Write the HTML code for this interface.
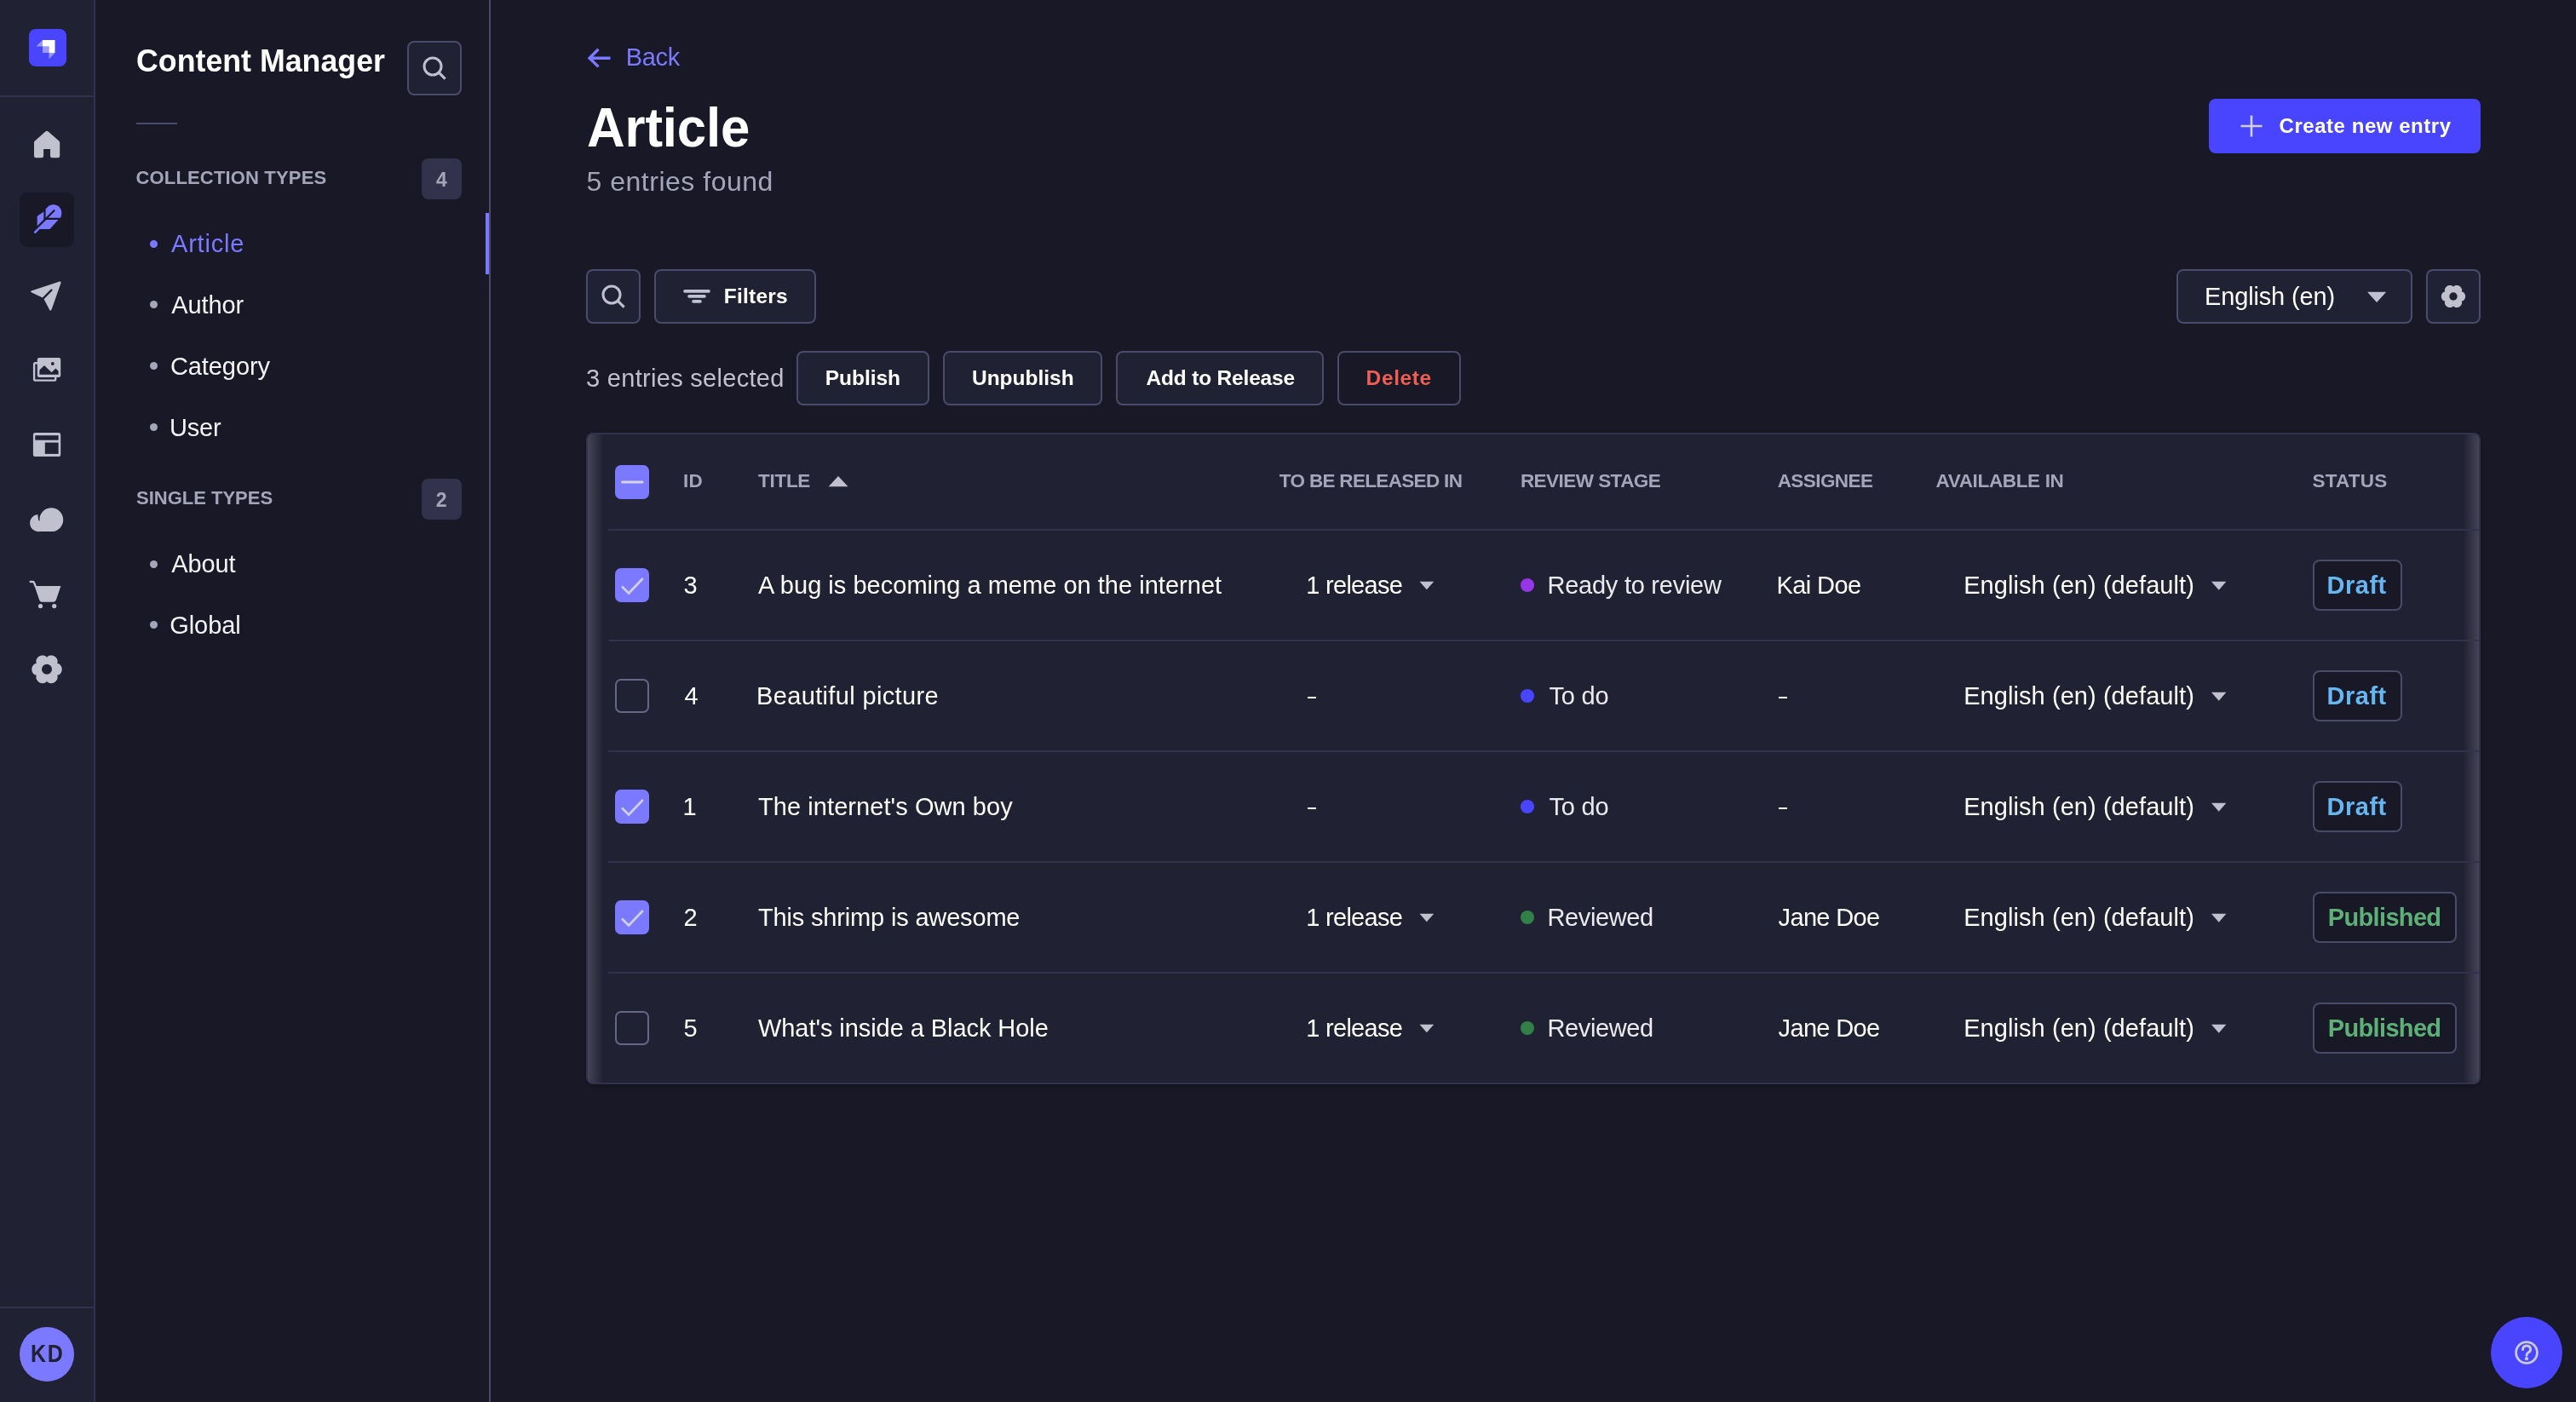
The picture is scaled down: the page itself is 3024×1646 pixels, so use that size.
<!DOCTYPE html>
<html><head><meta charset="utf-8"><title>Content Manager</title>
<style>
html,body{margin:0;padding:0;width:3024px;height:1646px;overflow:hidden;background:#181826;font-family:"Liberation Sans",sans-serif}
.t{position:absolute;white-space:pre;line-height:1;}
#tx{position:absolute;left:0;top:0;width:3024px;height:1646px;will-change:transform}
svg{position:absolute;left:0;top:0}
</style></head><body>
<div style="position:absolute;left:0px;top:0px;width:110px;height:1646px;background:#212134;border-radius:0px;box-sizing:border-box;"></div><div style="position:absolute;left:110px;top:0px;width:2px;height:1646px;background:#32324d;border-radius:0px;box-sizing:border-box;"></div><div style="position:absolute;left:0px;top:112px;width:110px;height:2px;background:#32324d;border-radius:0px;box-sizing:border-box;"></div><div style="position:absolute;left:0px;top:1534px;width:110px;height:2px;background:#32324d;border-radius:0px;box-sizing:border-box;"></div><div style="position:absolute;left:574px;top:0px;width:2px;height:1646px;background:#4a4a6a;border-radius:0px;box-sizing:border-box;"></div><div style="position:absolute;left:570px;top:250px;width:4px;height:72px;background:#7b79ff;border-radius:0px;box-sizing:border-box;"></div><div style="position:absolute;left:478px;top:48px;width:64px;height:64px;background:#212134;border:2px solid #4a4a6a;border-radius:8px;box-sizing:border-box;"></div><div style="position:absolute;left:160px;top:144px;width:48px;height:2px;background:#4a4a6a;border-radius:0px;box-sizing:border-box;"></div><div style="position:absolute;left:495px;top:186px;width:47px;height:48px;background:#32324d;border-radius:8px;box-sizing:border-box;"></div><div style="position:absolute;left:495px;top:562px;width:47px;height:48px;background:#32324d;border-radius:8px;box-sizing:border-box;"></div><div style="position:absolute;left:175.5px;top:282.0px;width:9px;height:9px;border-radius:50%;background:#7b79ff"></div><div style="position:absolute;left:175.5px;top:353.3px;width:9px;height:9px;border-radius:50%;background:#a5a5ba"></div><div style="position:absolute;left:175.5px;top:425.0px;width:9px;height:9px;border-radius:50%;background:#a5a5ba"></div><div style="position:absolute;left:175.5px;top:497.0px;width:9px;height:9px;border-radius:50%;background:#a5a5ba"></div><div style="position:absolute;left:175.5px;top:657.8px;width:9px;height:9px;border-radius:50%;background:#a5a5ba"></div><div style="position:absolute;left:175.5px;top:729.3px;width:9px;height:9px;border-radius:50%;background:#a5a5ba"></div><div style="position:absolute;left:2593px;top:116px;width:319px;height:64px;background:#4945ff;border-radius:8px;box-sizing:border-box;"></div><div style="position:absolute;left:688px;top:316px;width:64px;height:64px;background:#212134;border:2px solid #4a4a6a;border-radius:8px;box-sizing:border-box;"></div><div style="position:absolute;left:768px;top:316px;width:190px;height:64px;background:#212134;border:2px solid #4a4a6a;border-radius:8px;box-sizing:border-box;"></div><div style="position:absolute;left:2555px;top:316px;width:277px;height:64px;background:#212134;border:2px solid #4a4a6a;border-radius:8px;box-sizing:border-box;"></div><div style="position:absolute;left:2848px;top:316px;width:64px;height:64px;background:#212134;border:2px solid #4a4a6a;border-radius:8px;box-sizing:border-box;"></div><div style="position:absolute;left:935px;top:412px;width:156px;height:64px;background:#212134;border:2px solid #4a4a6a;border-radius:8px;box-sizing:border-box;"></div><div style="position:absolute;left:1107px;top:412px;width:187px;height:64px;background:#212134;border:2px solid #4a4a6a;border-radius:8px;box-sizing:border-box;"></div><div style="position:absolute;left:1310px;top:412px;width:244px;height:64px;background:#212134;border:2px solid #4a4a6a;border-radius:8px;box-sizing:border-box;"></div><div style="position:absolute;left:1570px;top:412px;width:145px;height:64px;background:#181826;border:2px solid #4a4a6a;border-radius:8px;box-sizing:border-box;"></div><div style="position:absolute;left:688px;top:508px;width:2224px;height:765px;background:#212134;border:2px solid #32324d;border-radius:8px;box-sizing:border-box;box-shadow:0 2px 4px rgba(0,0,0,.25);overflow:hidden"><div style="position:absolute;left:0;top:0;bottom:0;width:18px;background:linear-gradient(to right,rgba(110,110,125,.45),rgba(33,33,52,0))"></div><div style="position:absolute;right:0;top:0;bottom:0;width:18px;background:linear-gradient(to left,rgba(110,110,125,.45),rgba(33,33,52,0))"></div></div><div style="position:absolute;left:714px;top:621px;width:2196px;height:2px;background:#32324d;border-radius:0px;box-sizing:border-box;"></div><div style="position:absolute;left:714px;top:751px;width:2196px;height:2px;background:#32324d;border-radius:0px;box-sizing:border-box;"></div><div style="position:absolute;left:714px;top:881px;width:2196px;height:2px;background:#32324d;border-radius:0px;box-sizing:border-box;"></div><div style="position:absolute;left:714px;top:1011px;width:2196px;height:2px;background:#32324d;border-radius:0px;box-sizing:border-box;"></div><div style="position:absolute;left:714px;top:1141px;width:2196px;height:2px;background:#32324d;border-radius:0px;box-sizing:border-box;"></div><div style="position:absolute;left:1535px;top:817.6px;width:9.8px;height:2.6px;background:#fff"></div><div style="position:absolute;left:2087.6px;top:817.6px;width:10px;height:2.6px;background:#fff"></div><div style="position:absolute;left:1535px;top:947.6px;width:9.8px;height:2.6px;background:#fff"></div><div style="position:absolute;left:2087.6px;top:947.6px;width:10px;height:2.6px;background:#fff"></div><div style="position:absolute;left:2715px;top:657px;width:105px;height:60px;background:#181826;border:2px solid #4a4a6a;border-radius:8px;box-sizing:border-box;"></div><div style="position:absolute;left:2715px;top:787px;width:105px;height:60px;background:#181826;border:2px solid #4a4a6a;border-radius:8px;box-sizing:border-box;"></div><div style="position:absolute;left:2715px;top:917px;width:105px;height:60px;background:#181826;border:2px solid #4a4a6a;border-radius:8px;box-sizing:border-box;"></div><div style="position:absolute;left:2715px;top:1047px;width:169px;height:60px;background:#181826;border:2px solid #4a4a6a;border-radius:8px;box-sizing:border-box;"></div><div style="position:absolute;left:2715px;top:1177px;width:169px;height:60px;background:#181826;border:2px solid #4a4a6a;border-radius:8px;box-sizing:border-box;"></div>
<svg width="3024" height="1646" viewBox="0 0 3024 1646"><rect x="34" y="34" width="44" height="44" rx="8" fill="#4945ff"/><path d="M50 47 H64.5 V62 H57.5 V54.5 H50 Z" fill="#fff"/><path d="M50 47 V54.5 H42.5 Z" fill="#fff" opacity=".45"/><path d="M57.5 62 V69.2 L64.5 62 Z" fill="#fff" opacity=".45"/><rect x="50" y="54.5" width="7.5" height="7.5" fill="#fff" opacity=".45"/><path d="M53.6 154.3 Q55 153 56.4 154.3 L69.3 165.6 Q70.2 166.4 70.2 167.6 V183 Q70.2 185.2 68 185.2 H61.2 Q59 185.2 59 183 V175 H51.1 V183 Q51.1 185.2 48.9 185.2 H42.2 Q40 185.2 40 183 V167.6 Q40 166.4 40.9 165.6 Z" fill="#c0c0cf"/><rect x="23" y="226" width="64" height="64" rx="9" fill="#181826"/><path d="M53.55 255.7 V245.4 L57.2 241.8 C58.8 240.7 60.8 240.2 62.8 240.2 C68.1 240.2 72.3 244.4 72.3 249.7 C72.3 251.9 71.9 253.9 71.1 255.7 Z" fill="#7b79ff"/><path d="M51.4 248.4 V258 L43.7 265.6 V254.6 Q43.7 253.8 44.4 253.2 Z" fill="#7b79ff"/><path d="M63.5 247.2 L42.5 268.2" stroke="#181826" stroke-width="2.1" stroke-linecap="round"/><path d="M54.3 258 H68.5 L58.5 269.1 H46.6 L42.2 273.5 Q41.2 274.5 40.2 273.5 Q39.3 272.6 40.3 271.7 Z" fill="#7b79ff"/><path d="M70 330.6 Q72 330.2 71.5 332.2 L60.6 363.2 Q59.4 366 58 363.4 L51.2 350.6 L50 349.4 L37.4 343.6 Q34.8 342.2 37.4 341.2 Z" fill="#c0c0cf"/><path d="M60.4 340.6 L50.4 350.6" stroke="#212134" stroke-width="2.4" stroke-linecap="round"/><path d="M44 426.2 H41.4 Q40.1 426.2 40.1 427.5 V445.3 Q40.1 446.6 41.4 446.6 H63.9 Q65.2 446.6 65.2 445.3 V443" stroke="#c0c0cf" stroke-width="2.4" fill="none"/><rect x="43.8" y="420" width="27.4" height="23" rx="2.2" fill="#c0c0cf"/><path d="M46.4 439.8 V434.6 L52 429 L60.5 437.2 L65.4 432.6 L68.6 435.8 V439.8 Z" fill="#212134"/><circle cx="61.8" cy="427" r="1.9" fill="#212134"/><rect x="38.9" y="508" width="32.3" height="28" rx="2.6" fill="#c0c0cf"/><rect x="41.3" y="511.2" width="27.3" height="5.5" fill="#212134"/><rect x="52.8" y="519.6" width="15.8" height="13.3" fill="#212134"/><path d="M44.3 604.1 A10 10 0 1 0 45.9 624.1 H60.3 A13.9 13.9 0 1 0 46.45 611.4 L45.2 610.9 Z" fill="#c0c0cf"/><path d="M35.6 683 H38.6 Q39.6 683 40 684 L41.6 688" stroke="#c0c0cf" stroke-width="2.3" fill="none" stroke-linecap="round"/><path d="M40.6 688.1 H71.4 L65.8 704.6 Q65 706.7 62.8 706.7 H49 Q46.8 706.7 46.2 704.6 Z" fill="#c0c0cf"/><circle cx="47.5" cy="711.6" r="2.6" fill="#c0c0cf"/><circle cx="63.7" cy="711.6" r="2.6" fill="#c0c0cf"/><polygon points="72.70,785.80 72.69,786.11 72.68,786.42 72.65,786.72 72.60,787.03 72.55,787.34 72.48,787.64 72.40,787.94 72.31,788.23 72.21,788.53 72.10,788.81 71.97,789.10 71.83,789.38 71.69,789.65 71.53,789.92 71.35,790.18 71.17,790.44 70.98,790.68 70.77,790.92 70.55,791.15 70.32,791.38 70.08,791.59 69.83,791.79 69.56,791.98 69.28,792.16 68.98,792.32 68.66,792.46 68.32,792.59 67.94,792.68 67.51,792.73 66.78,792.60 67.26,793.16 67.43,793.57 67.54,793.94 67.60,794.30 67.63,794.65 67.64,794.99 67.63,795.32 67.60,795.64 67.55,795.97 67.49,796.28 67.41,796.59 67.32,796.89 67.22,797.19 67.10,797.49 66.97,797.77 66.83,798.05 66.68,798.32 66.52,798.59 66.34,798.85 66.16,799.10 65.97,799.34 65.76,799.58 65.55,799.80 65.33,800.02 65.10,800.23 64.87,800.43 64.62,800.62 64.37,800.80 64.11,800.97 63.85,801.13 63.58,801.28 63.30,801.42 63.02,801.54 62.74,801.66 62.44,801.77 62.15,801.86 61.85,801.94 61.55,802.01 61.24,802.07 60.94,802.11 60.63,802.15 60.32,802.17 60.01,802.18 59.69,802.17 59.38,802.15 59.07,802.12 58.76,802.08 58.45,802.02 58.14,801.95 57.83,801.86 57.53,801.75 57.23,801.63 56.93,801.50 56.63,801.34 56.34,801.16 56.06,800.96 55.78,800.73 55.51,800.45 55.25,800.10 55.00,799.40 54.75,800.10 54.49,800.45 54.22,800.73 53.94,800.96 53.66,801.16 53.37,801.34 53.07,801.50 52.77,801.63 52.47,801.75 52.17,801.86 51.86,801.95 51.55,802.02 51.24,802.08 50.93,802.12 50.62,802.15 50.31,802.17 49.99,802.18 49.68,802.17 49.37,802.15 49.06,802.11 48.76,802.07 48.45,802.01 48.15,801.94 47.85,801.86 47.56,801.77 47.26,801.66 46.98,801.54 46.70,801.42 46.42,801.28 46.15,801.13 45.89,800.97 45.63,800.80 45.38,800.62 45.13,800.43 44.90,800.23 44.67,800.02 44.45,799.80 44.24,799.58 44.03,799.34 43.84,799.10 43.66,798.85 43.48,798.59 43.32,798.32 43.17,798.05 43.03,797.77 42.90,797.49 42.78,797.19 42.68,796.89 42.59,796.59 42.51,796.28 42.45,795.97 42.40,795.64 42.37,795.32 42.36,794.99 42.37,794.65 42.40,794.30 42.46,793.94 42.57,793.57 42.74,793.16 43.22,792.60 42.49,792.73 42.06,792.68 41.68,792.59 41.34,792.46 41.02,792.32 40.72,792.16 40.44,791.98 40.17,791.79 39.92,791.59 39.68,791.38 39.45,791.15 39.23,790.92 39.02,790.68 38.83,790.44 38.65,790.18 38.47,789.92 38.31,789.65 38.17,789.38 38.03,789.10 37.90,788.81 37.79,788.53 37.69,788.23 37.60,787.94 37.52,787.64 37.45,787.34 37.40,787.03 37.35,786.72 37.32,786.42 37.31,786.11 37.30,785.80 37.31,785.49 37.32,785.18 37.35,784.88 37.40,784.57 37.45,784.26 37.52,783.96 37.60,783.66 37.69,783.37 37.79,783.07 37.90,782.79 38.03,782.50 38.17,782.22 38.31,781.95 38.47,781.68 38.65,781.42 38.83,781.16 39.02,780.92 39.23,780.68 39.45,780.45 39.68,780.22 39.92,780.01 40.17,779.81 40.44,779.62 40.72,779.44 41.02,779.28 41.34,779.14 41.68,779.01 42.06,778.92 42.49,778.87 43.22,779.00 42.74,778.44 42.57,778.03 42.46,777.66 42.40,777.30 42.37,776.95 42.36,776.61 42.37,776.28 42.40,775.96 42.45,775.63 42.51,775.32 42.59,775.01 42.68,774.71 42.78,774.41 42.90,774.11 43.03,773.83 43.17,773.55 43.32,773.28 43.48,773.01 43.66,772.75 43.84,772.50 44.03,772.26 44.24,772.02 44.45,771.80 44.67,771.58 44.90,771.37 45.13,771.17 45.38,770.98 45.63,770.80 45.89,770.63 46.15,770.47 46.42,770.32 46.70,770.18 46.98,770.06 47.26,769.94 47.56,769.83 47.85,769.74 48.15,769.66 48.45,769.59 48.76,769.53 49.06,769.49 49.37,769.45 49.68,769.43 49.99,769.42 50.31,769.43 50.62,769.45 50.93,769.48 51.24,769.52 51.55,769.58 51.86,769.65 52.17,769.74 52.47,769.85 52.77,769.97 53.07,770.10 53.37,770.26 53.66,770.44 53.94,770.64 54.22,770.87 54.49,771.15 54.75,771.50 55.00,772.20 55.25,771.50 55.51,771.15 55.78,770.87 56.06,770.64 56.34,770.44 56.63,770.26 56.93,770.10 57.23,769.97 57.53,769.85 57.83,769.74 58.14,769.65 58.45,769.58 58.76,769.52 59.07,769.48 59.38,769.45 59.69,769.43 60.01,769.42 60.32,769.43 60.63,769.45 60.94,769.49 61.24,769.53 61.55,769.59 61.85,769.66 62.15,769.74 62.44,769.83 62.74,769.94 63.02,770.06 63.30,770.18 63.58,770.32 63.85,770.47 64.11,770.63 64.37,770.80 64.62,770.98 64.87,771.17 65.10,771.37 65.33,771.58 65.55,771.80 65.76,772.02 65.97,772.26 66.16,772.50 66.34,772.75 66.52,773.01 66.68,773.28 66.83,773.55 66.97,773.83 67.10,774.11 67.22,774.41 67.32,774.71 67.41,775.01 67.49,775.32 67.55,775.63 67.60,775.96 67.63,776.28 67.64,776.61 67.63,776.95 67.60,777.30 67.54,777.66 67.43,778.03 67.26,778.44 66.78,779.00 67.51,778.87 67.94,778.92 68.32,779.01 68.66,779.14 68.98,779.28 69.28,779.44 69.56,779.62 69.83,779.81 70.08,780.01 70.32,780.22 70.55,780.45 70.77,780.68 70.98,780.92 71.17,781.16 71.35,781.42 71.53,781.68 71.69,781.95 71.83,782.22 71.97,782.50 72.10,782.79 72.21,783.07 72.31,783.37 72.40,783.66 72.48,783.96 72.55,784.26 72.60,784.57 72.65,784.88 72.68,785.18 72.69,785.49" fill="#c0c0cf"/><circle cx="55" cy="785.8" r="6.0" fill="#212134"/><circle cx="55" cy="1590" r="32" fill="#7b79ff"/><circle cx="508" cy="78" r="10" stroke="#c0c0cf" stroke-width="3" fill="none"/><path d="M515.6 85.6 L522.6 92.6" stroke="#c0c0cf" stroke-width="3"/><path d="M702.5 57.7 L692 68.2 L702.5 78.4 M692.5 68.2 H716.5" stroke="#7b79ff" stroke-width="3.4" fill="none"/><path d="M2643 135.5 V160.5 M2630.5 148 H2655.5" stroke="#d0d0dc" stroke-width="2.6"/><circle cx="718" cy="346" r="10" stroke="#c0c0cf" stroke-width="3" fill="none"/><path d="M725.6 353.6 L732.6 360.6" stroke="#c0c0cf" stroke-width="3"/><path d="M804 341.9 H832 M809 347.9 H827 M814 353.9 H822" stroke="#c0c0cf" stroke-width="3.6" stroke-linecap="round"/><path d="M2779 342.7 H2801.2 L2790.1 355 Z" fill="#c0c0cf"/><polygon points="2894.10,348.00 2894.10,348.25 2894.08,348.49 2894.06,348.74 2894.02,348.98 2893.98,349.22 2893.93,349.46 2893.87,349.70 2893.80,349.94 2893.71,350.17 2893.63,350.40 2893.53,350.63 2893.42,350.85 2893.30,351.07 2893.17,351.28 2893.04,351.49 2892.89,351.70 2892.74,351.90 2892.58,352.09 2892.41,352.27 2892.23,352.45 2892.04,352.62 2891.84,352.78 2891.62,352.93 2891.40,353.08 2891.17,353.21 2890.92,353.32 2890.65,353.43 2890.35,353.50 2890.01,353.55 2889.44,353.45 2889.81,353.89 2889.94,354.21 2890.02,354.51 2890.07,354.79 2890.09,355.07 2890.10,355.34 2890.09,355.60 2890.06,355.86 2890.02,356.11 2889.97,356.36 2889.90,356.61 2889.83,356.85 2889.74,357.09 2889.65,357.32 2889.55,357.55 2889.43,357.77 2889.31,357.98 2889.18,358.19 2889.04,358.40 2888.89,358.60 2888.74,358.79 2888.58,358.98 2888.41,359.16 2888.23,359.33 2888.05,359.50 2887.86,359.65 2887.67,359.81 2887.47,359.95 2887.26,360.08 2887.05,360.21 2886.83,360.33 2886.61,360.44 2886.39,360.54 2886.16,360.64 2885.93,360.72 2885.70,360.79 2885.46,360.86 2885.22,360.92 2884.98,360.96 2884.73,361.00 2884.49,361.03 2884.24,361.05 2883.99,361.05 2883.74,361.05 2883.49,361.04 2883.25,361.02 2883.00,360.98 2882.75,360.94 2882.50,360.88 2882.26,360.81 2882.02,360.73 2881.78,360.64 2881.54,360.53 2881.30,360.41 2881.07,360.28 2880.85,360.12 2880.63,359.93 2880.41,359.72 2880.20,359.44 2880.00,358.90 2879.80,359.44 2879.59,359.72 2879.37,359.93 2879.15,360.12 2878.93,360.28 2878.70,360.41 2878.46,360.53 2878.22,360.64 2877.98,360.73 2877.74,360.81 2877.50,360.88 2877.25,360.94 2877.00,360.98 2876.75,361.02 2876.51,361.04 2876.26,361.05 2876.01,361.05 2875.76,361.05 2875.51,361.03 2875.27,361.00 2875.02,360.96 2874.78,360.92 2874.54,360.86 2874.30,360.79 2874.07,360.72 2873.84,360.64 2873.61,360.54 2873.39,360.44 2873.17,360.33 2872.95,360.21 2872.74,360.08 2872.53,359.95 2872.33,359.81 2872.14,359.65 2871.95,359.50 2871.77,359.33 2871.59,359.16 2871.42,358.98 2871.26,358.79 2871.11,358.60 2870.96,358.40 2870.82,358.19 2870.69,357.98 2870.57,357.77 2870.45,357.55 2870.35,357.32 2870.26,357.09 2870.17,356.85 2870.10,356.61 2870.03,356.36 2869.98,356.11 2869.94,355.86 2869.91,355.60 2869.90,355.34 2869.91,355.07 2869.93,354.79 2869.98,354.51 2870.06,354.21 2870.19,353.89 2870.56,353.45 2869.99,353.55 2869.65,353.50 2869.35,353.43 2869.08,353.32 2868.83,353.21 2868.60,353.08 2868.38,352.93 2868.16,352.78 2867.96,352.62 2867.77,352.45 2867.59,352.27 2867.42,352.09 2867.26,351.90 2867.11,351.70 2866.96,351.49 2866.83,351.28 2866.70,351.07 2866.58,350.85 2866.47,350.63 2866.37,350.40 2866.29,350.17 2866.20,349.94 2866.13,349.70 2866.07,349.46 2866.02,349.22 2865.98,348.98 2865.94,348.74 2865.92,348.49 2865.90,348.25 2865.90,348.00 2865.90,347.75 2865.92,347.51 2865.94,347.26 2865.98,347.02 2866.02,346.78 2866.07,346.54 2866.13,346.30 2866.20,346.06 2866.29,345.83 2866.37,345.60 2866.47,345.37 2866.58,345.15 2866.70,344.93 2866.83,344.72 2866.96,344.51 2867.11,344.30 2867.26,344.10 2867.42,343.91 2867.59,343.73 2867.77,343.55 2867.96,343.38 2868.16,343.22 2868.38,343.07 2868.60,342.92 2868.83,342.79 2869.08,342.68 2869.35,342.57 2869.65,342.50 2869.99,342.45 2870.56,342.55 2870.19,342.11 2870.06,341.79 2869.98,341.49 2869.93,341.21 2869.91,340.93 2869.90,340.66 2869.91,340.40 2869.94,340.14 2869.98,339.89 2870.03,339.64 2870.10,339.39 2870.17,339.15 2870.26,338.91 2870.35,338.68 2870.45,338.45 2870.57,338.23 2870.69,338.02 2870.82,337.81 2870.96,337.60 2871.11,337.40 2871.26,337.21 2871.42,337.02 2871.59,336.84 2871.77,336.67 2871.95,336.50 2872.14,336.35 2872.33,336.19 2872.53,336.05 2872.74,335.92 2872.95,335.79 2873.17,335.67 2873.39,335.56 2873.61,335.46 2873.84,335.36 2874.07,335.28 2874.30,335.21 2874.54,335.14 2874.78,335.08 2875.02,335.04 2875.27,335.00 2875.51,334.97 2875.76,334.95 2876.01,334.95 2876.26,334.95 2876.51,334.96 2876.75,334.98 2877.00,335.02 2877.25,335.06 2877.50,335.12 2877.74,335.19 2877.98,335.27 2878.22,335.36 2878.46,335.47 2878.70,335.59 2878.93,335.72 2879.15,335.88 2879.37,336.07 2879.59,336.28 2879.80,336.56 2880.00,337.10 2880.20,336.56 2880.41,336.28 2880.63,336.07 2880.85,335.88 2881.07,335.72 2881.30,335.59 2881.54,335.47 2881.78,335.36 2882.02,335.27 2882.26,335.19 2882.50,335.12 2882.75,335.06 2883.00,335.02 2883.25,334.98 2883.49,334.96 2883.74,334.95 2883.99,334.95 2884.24,334.95 2884.49,334.97 2884.73,335.00 2884.98,335.04 2885.22,335.08 2885.46,335.14 2885.70,335.21 2885.93,335.28 2886.16,335.36 2886.39,335.46 2886.61,335.56 2886.83,335.67 2887.05,335.79 2887.26,335.92 2887.47,336.05 2887.67,336.19 2887.86,336.35 2888.05,336.50 2888.23,336.67 2888.41,336.84 2888.58,337.02 2888.74,337.21 2888.89,337.40 2889.04,337.60 2889.18,337.81 2889.31,338.02 2889.43,338.23 2889.55,338.45 2889.65,338.68 2889.74,338.91 2889.83,339.15 2889.90,339.39 2889.97,339.64 2890.02,339.89 2890.06,340.14 2890.09,340.40 2890.10,340.66 2890.09,340.93 2890.07,341.21 2890.02,341.49 2889.94,341.79 2889.81,342.11 2889.44,342.55 2890.01,342.45 2890.35,342.50 2890.65,342.57 2890.92,342.68 2891.17,342.79 2891.40,342.92 2891.62,343.07 2891.84,343.22 2892.04,343.38 2892.23,343.55 2892.41,343.73 2892.58,343.91 2892.74,344.10 2892.89,344.30 2893.04,344.51 2893.17,344.72 2893.30,344.93 2893.42,345.15 2893.53,345.37 2893.63,345.60 2893.71,345.83 2893.80,346.06 2893.87,346.30 2893.93,346.54 2893.98,346.78 2894.02,347.02 2894.06,347.26 2894.08,347.51 2894.10,347.75" fill="#c0c0cf"/><circle cx="2880" cy="348" r="4.7" fill="#212134"/><rect x="722" y="546" width="40" height="40" rx="7" fill="#7b79ff"/><path d="M730.5 566 H754" stroke="#d6d6e2" stroke-width="3" stroke-linecap="round"/><path d="M972.7 571.3 L984 559 L995.5 571.3 Z" fill="#c0c0cf"/><rect x="722" y="667" width="40" height="40" rx="7" fill="#7b79ff"/><path d="M730 688.5 L738.1 696.4 L754.8 679" stroke="#cfcfd8" stroke-width="2.8" fill="none"/><rect x="723" y="798" width="38" height="38" rx="6" fill="#212134" stroke="#666687" stroke-width="2"/><rect x="722" y="927" width="40" height="40" rx="7" fill="#7b79ff"/><path d="M730 948.5 L738.1 956.4 L754.8 939" stroke="#cfcfd8" stroke-width="2.8" fill="none"/><rect x="722" y="1057" width="40" height="40" rx="7" fill="#7b79ff"/><path d="M730 1078.5 L738.1 1086.4 L754.8 1069" stroke="#cfcfd8" stroke-width="2.8" fill="none"/><rect x="723" y="1188" width="38" height="38" rx="6" fill="#212134" stroke="#666687" stroke-width="2"/><path d="M1666.5 682.8 H1683.2 L1674.85 692.3 Z" fill="#c0c0cf"/><circle cx="1793" cy="687" r="8" fill="#9736e8"/><path d="M2596 682.7 H2613.4 L2604.7 692.7 Z" fill="#c0c0cf"/><circle cx="1793" cy="817" r="8" fill="#4945ff"/><path d="M2596 812.7 H2613.4 L2604.7 822.7 Z" fill="#c0c0cf"/><circle cx="1793" cy="947" r="8" fill="#4945ff"/><path d="M2596 942.7 H2613.4 L2604.7 952.7 Z" fill="#c0c0cf"/><path d="M1666.5 1072.8 H1683.2 L1674.85 1082.3 Z" fill="#c0c0cf"/><circle cx="1793" cy="1077" r="8" fill="#328048"/><path d="M2596 1072.7 H2613.4 L2604.7 1082.7 Z" fill="#c0c0cf"/><path d="M1666.5 1202.8 H1683.2 L1674.85 1212.3 Z" fill="#c0c0cf"/><circle cx="1793" cy="1207" r="8" fill="#328048"/><path d="M2596 1202.7 H2613.4 L2604.7 1212.7 Z" fill="#c0c0cf"/><circle cx="2966" cy="1588" r="42" fill="#4945ff"/><circle cx="2966" cy="1588" r="12.4" stroke="#c8c8d6" stroke-width="2.8" fill="none"/><path d="M2961.6 1584.6 Q2961.6 1580 2966 1580 Q2970.6 1580 2970.6 1584.2 Q2970.6 1586.6 2968 1588 Q2966 1589.2 2966 1591.2" stroke="#c8c8d6" stroke-width="3" fill="none" stroke-linecap="round"/><circle cx="2966" cy="1595.2" r="2.1" fill="#c8c8d6"/></svg>
<div id="tx"><div id="cm" class="t" style="left:159.50px;top:52.53px;font-size:37px;font-weight:700;color:#ffffff;letter-spacing:0.023px;transform:scaleX(0.965);transform-origin:0 0">Content Manager</div><div id="ct" class="t" style="left:159.50px;top:198.41px;font-size:22px;font-weight:700;color:#a5a5ba;letter-spacing:0.160px">COLLECTION TYPES</div><div id="b4" class="t" style="left:512.00px;top:199.56px;font-size:23px;font-weight:700;color:#a5a5ba;letter-spacing:0.000px">4</div><div id="sart" class="t" style="left:201.00px;top:271.50px;font-size:29px;font-weight:400;color:#7b79ff;letter-spacing:0.800px">Article</div><div id="saut" class="t" style="left:201.30px;top:343.69px;font-size:29px;font-weight:400;color:#f4f4f8;letter-spacing:-0.128px">Author</div><div id="scat" class="t" style="left:199.90px;top:415.69px;font-size:29px;font-weight:400;color:#f4f4f8;letter-spacing:-0.069px">Category</div><div id="susr" class="t" style="left:198.90px;top:487.89px;font-size:29px;font-weight:400;color:#f4f4f8;letter-spacing:-0.160px">User</div><div id="st" class="t" style="left:160.10px;top:574.41px;font-size:22px;font-weight:700;color:#a5a5ba;letter-spacing:-0.015px">SINGLE TYPES</div><div id="b2" class="t" style="left:511.80px;top:575.87px;font-size:23px;font-weight:700;color:#a5a5ba;letter-spacing:0.000px">2</div><div id="sabt" class="t" style="left:201.30px;top:648.00px;font-size:29px;font-weight:400;color:#f4f4f8;letter-spacing:-0.160px">About</div><div id="sglb" class="t" style="left:199.30px;top:719.60px;font-size:29px;font-weight:400;color:#f4f4f8;letter-spacing:-0.096px">Global</div><div id="kd" class="t" style="left:36.00px;top:1575.49px;font-size:29px;font-weight:700;color:#212134;letter-spacing:2.080px;transform:scaleX(0.86);transform-origin:0 0">KD</div><div id="back" class="t" style="left:734.70px;top:53.40px;font-size:29px;font-weight:400;color:#7b79ff;letter-spacing:-0.267px">Back</div><div id="title" class="t" style="left:688.50px;top:117.92px;font-size:64px;font-weight:700;color:#ffffff;letter-spacing:-0.133px;transform:scaleX(0.965);transform-origin:0 0">Article</div><div id="found" class="t" style="left:688.50px;top:196.96px;font-size:32px;font-weight:400;color:#a5a5ba;letter-spacing:0.514px">5 entries found</div><div id="create" class="t" style="left:2675.50px;top:135.72px;font-size:24px;font-weight:700;color:#ffffff;letter-spacing:0.544px">Create new entry</div><div id="filters" class="t" style="left:849.80px;top:335.50px;font-size:24.5px;font-weight:700;color:#ffffff;letter-spacing:0.213px">Filters</div><div id="eng" class="t" style="left:2588.00px;top:334.19px;font-size:29px;font-weight:400;color:#ffffff;letter-spacing:-0.145px">English (en)</div><div id="sel" class="t" style="left:688.00px;top:429.60px;font-size:29px;font-weight:400;color:#c0c0cf;letter-spacing:0.301px">3 entries selected</div><div id="pub" class="t" style="left:968.70px;top:431.80px;font-size:24.5px;font-weight:700;color:#ffffff;letter-spacing:-0.027px">Publish</div><div id="unpub" class="t" style="left:1141.00px;top:431.80px;font-size:24.5px;font-weight:700;color:#ffffff;letter-spacing:-0.020px">Unpublish</div><div id="atr" class="t" style="left:1345.50px;top:431.80px;font-size:24.5px;font-weight:700;color:#ffffff;letter-spacing:-0.185px">Add to Release</div><div id="del" class="t" style="left:1603.60px;top:431.80px;font-size:24.5px;font-weight:700;color:#ee5e52;letter-spacing:0.608px">Delete</div><div id="hid" class="t" style="left:802.00px;top:554.39px;font-size:22.5px;font-weight:700;color:#a5a5ba;letter-spacing:0.320px">ID</div><div id="htitle" class="t" style="left:890.00px;top:554.39px;font-size:22.5px;font-weight:700;color:#a5a5ba;letter-spacing:-0.280px">TITLE</div><div id="hrel" class="t" style="left:1501.80px;top:554.39px;font-size:22.5px;font-weight:700;color:#a5a5ba;letter-spacing:-0.670px">TO BE RELEASED IN</div><div id="hrev" class="t" style="left:1784.90px;top:554.39px;font-size:22.5px;font-weight:700;color:#a5a5ba;letter-spacing:-0.538px">REVIEW STAGE</div><div id="hasg" class="t" style="left:2086.70px;top:554.39px;font-size:22.5px;font-weight:700;color:#a5a5ba;letter-spacing:-0.571px">ASSIGNEE</div><div id="hav" class="t" style="left:2272.40px;top:554.39px;font-size:22.5px;font-weight:700;color:#a5a5ba;letter-spacing:-0.335px">AVAILABLE IN</div><div id="hst" class="t" style="left:2714.60px;top:554.39px;font-size:22.5px;font-weight:700;color:#a5a5ba;letter-spacing:0.192px">STATUS</div><div id="r0id" class="t" style="left:802.60px;top:672.60px;font-size:29px;font-weight:400;color:#ffffff;letter-spacing:0.000px">3</div><div id="r0t" class="t" style="left:890.00px;top:672.60px;font-size:29px;font-weight:400;color:#ffffff;letter-spacing:0.021px">A bug is becoming a meme on the internet</div><div id="r0rel" class="t" style="left:1533.30px;top:672.60px;font-size:29px;font-weight:400;color:#ffffff;letter-spacing:-0.720px">1 release</div><div id="r0rev" class="t" style="left:1816.50px;top:672.60px;font-size:29px;font-weight:400;color:#eaeaef;letter-spacing:-0.251px">Ready to review</div><div id="r0asg" class="t" style="left:2085.60px;top:672.60px;font-size:29px;font-weight:400;color:#ffffff;letter-spacing:-0.613px">Kai Doe</div><div id="r0av" class="t" style="left:2305.20px;top:672.60px;font-size:29px;font-weight:400;color:#ffffff;letter-spacing:0.069px">English (en) (default)</div><div id="r0st" class="t" style="left:2731.60px;top:672.60px;font-size:29px;font-weight:700;color:#66b7f1;letter-spacing:0.480px">Draft</div><div id="r1id" class="t" style="left:803.60px;top:802.70px;font-size:29px;font-weight:400;color:#ffffff;letter-spacing:0.000px">4</div><div id="r1t" class="t" style="left:888.00px;top:802.70px;font-size:29px;font-weight:400;color:#ffffff;letter-spacing:0.350px">Beautiful picture</div><div id="r1rev" class="t" style="left:1818.50px;top:802.70px;font-size:29px;font-weight:400;color:#eaeaef;letter-spacing:-0.200px">To do</div><div id="r1av" class="t" style="left:2305.20px;top:802.70px;font-size:29px;font-weight:400;color:#ffffff;letter-spacing:0.069px">English (en) (default)</div><div id="r1st" class="t" style="left:2731.60px;top:802.70px;font-size:29px;font-weight:700;color:#66b7f1;letter-spacing:0.480px">Draft</div><div id="r2id" class="t" style="left:801.60px;top:932.70px;font-size:29px;font-weight:400;color:#ffffff;letter-spacing:0.000px">1</div><div id="r2t" class="t" style="left:890.00px;top:932.70px;font-size:29px;font-weight:400;color:#ffffff;letter-spacing:0.069px">The internet's Own boy</div><div id="r2rev" class="t" style="left:1818.50px;top:932.70px;font-size:29px;font-weight:400;color:#eaeaef;letter-spacing:-0.200px">To do</div><div id="r2av" class="t" style="left:2305.20px;top:932.70px;font-size:29px;font-weight:400;color:#ffffff;letter-spacing:0.069px">English (en) (default)</div><div id="r2st" class="t" style="left:2731.60px;top:932.70px;font-size:29px;font-weight:700;color:#66b7f1;letter-spacing:0.480px">Draft</div><div id="r3id" class="t" style="left:802.60px;top:1062.59px;font-size:29px;font-weight:400;color:#ffffff;letter-spacing:0.000px">2</div><div id="r3t" class="t" style="left:890.00px;top:1062.59px;font-size:29px;font-weight:400;color:#ffffff;letter-spacing:-0.168px">This shrimp is awesome</div><div id="r3rel" class="t" style="left:1533.30px;top:1062.59px;font-size:29px;font-weight:400;color:#ffffff;letter-spacing:-0.720px">1 release</div><div id="r3rev" class="t" style="left:1816.50px;top:1062.59px;font-size:29px;font-weight:400;color:#eaeaef;letter-spacing:-0.389px">Reviewed</div><div id="r3asg" class="t" style="left:2087.60px;top:1062.59px;font-size:29px;font-weight:400;color:#ffffff;letter-spacing:-0.663px">Jane Doe</div><div id="r3av" class="t" style="left:2305.20px;top:1062.59px;font-size:29px;font-weight:400;color:#ffffff;letter-spacing:0.069px">English (en) (default)</div><div id="r3st" class="t" style="left:2732.80px;top:1062.59px;font-size:29px;font-weight:700;color:#5cb176;letter-spacing:-0.660px">Published</div><div id="r4id" class="t" style="left:802.60px;top:1192.69px;font-size:29px;font-weight:400;color:#ffffff;letter-spacing:0.000px">5</div><div id="r4t" class="t" style="left:890.00px;top:1192.69px;font-size:29px;font-weight:400;color:#ffffff;letter-spacing:-0.064px">What's inside a Black Hole</div><div id="r4rel" class="t" style="left:1533.30px;top:1192.69px;font-size:29px;font-weight:400;color:#ffffff;letter-spacing:-0.720px">1 release</div><div id="r4rev" class="t" style="left:1816.50px;top:1192.69px;font-size:29px;font-weight:400;color:#eaeaef;letter-spacing:-0.389px">Reviewed</div><div id="r4asg" class="t" style="left:2087.60px;top:1192.69px;font-size:29px;font-weight:400;color:#ffffff;letter-spacing:-0.663px">Jane Doe</div><div id="r4av" class="t" style="left:2305.20px;top:1192.69px;font-size:29px;font-weight:400;color:#ffffff;letter-spacing:0.069px">English (en) (default)</div><div id="r4st" class="t" style="left:2732.80px;top:1192.69px;font-size:29px;font-weight:700;color:#5cb176;letter-spacing:-0.660px">Published</div></div>
</body></html>
